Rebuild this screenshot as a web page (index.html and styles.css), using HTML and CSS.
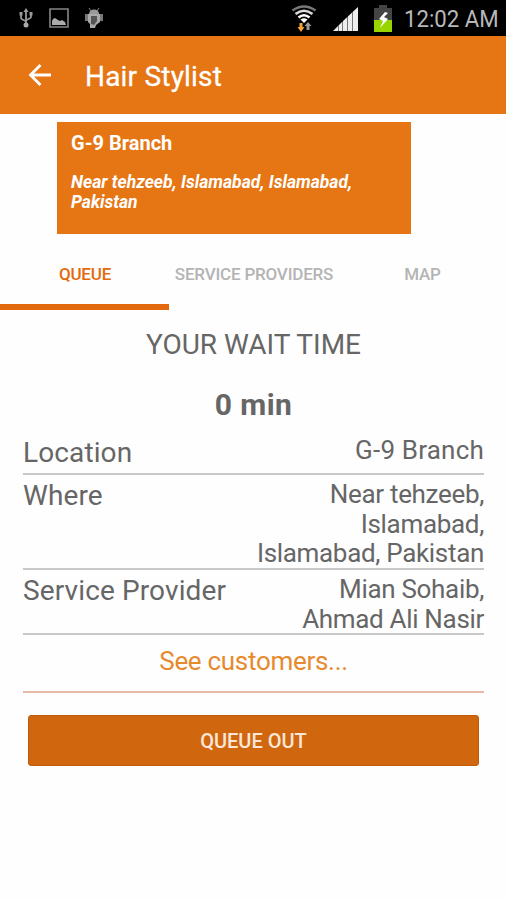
FILE: index.html
```html
<!DOCTYPE html>
<html lang="en">
<head>
<meta charset="utf-8">
<title>Hair Stylist</title>
<link rel="stylesheet" href="styles.css">
</head>
<body>
<div class="status">
  <svg class="usb" width="14" height="20" viewBox="0 0 14 20" fill="none" stroke="#999" stroke-width="1.800"><path d="M7 2v15M2 6v4c0 2 5 2 5 4M12 6v3c0 2-5 2-5 4"/><path d="M7 0L4.400 4h5.200zM.5 4h3v3.500h-3zM10.500 4h3v3.500h-3z" fill="#999" stroke="none"/><circle cx="7" cy="17" r="2.500" fill="#aaa" stroke="none"/></svg>
  <svg class="photo" width="20" height="20" viewBox="0 0 20 20"><path d="M1 1h18v18H1z" fill="none" stroke="#858585" stroke-width="1.600"/><path d="M3 17v-4l1-2 2-1 3 2 2 1 2-1 3 2 1 3z" fill="#aaa"/></svg>
  <svg class="droid" width="20" height="20" viewBox="0 0 20 20"><path d="M5 6c0-3 2-4.500 5-4.500S15 3 15 6z" fill="#999"/><path d="M5 0l2 3M15 0l-2 3" stroke="#888" stroke-width="1"/><path d="M1 6h3v7H1zM16 6h3v7h-3z" fill="#777"/><path d="M4 6h12v8l-4 3-1 3H6v-4l-2-2z" fill="#aaa"/><path d="M7 8h6v5l-3 4-3-1z" fill="#555"/></svg>
  <svg class="wifi" width="26" height="27" viewBox="0 0 26 27" fill="none"><path d="M1.500 5.500Q13-2.500 24.500 5.500" stroke="#777" stroke-width="2.500"/><path d="M4.500 9Q13 2.500 21.500 9" stroke="#ddd" stroke-width="2.600"/><path d="M7.500 12.500Q13 8 18.500 12.500" stroke="#fff" stroke-width="2.600"/><path d="M9.500 14.500q3.500-2.500 7 0L13 18z" fill="#fff"/><path d="M8.500 18h3v4h2L10 27l-3.500-5h2z" fill="#f2a33a"/><path d="M15.500 25v-4h-2l3.500-4 3.500 4h-2v4z" fill="#999"/></svg>
  <svg class="signal" width="25" height="24" viewBox="0 0 25 24"><path d="M0 24l5-5v5zM5.500 18.500l4-4V24h-4zM10 14l4.300-4v14H10zM14.800 9.500l4.300-4V24h-4.300zM19.600 5L25 0v24h-5.400z" fill="#eee"/></svg>
  <svg class="battery" width="18" height="27" viewBox="0 0 18 27"><path d="M5 0h8v3h5v12H0V3h5z" fill="#444"/><path d="M0 15h18v12H0z" fill="#98d400"/><path d="M11 7L5 14l4 2-3 7 8-9-4-2 4-4z" fill="#fff"/></svg>
  <span class="clock">12:02 AM</span>
</div>
<header class="bar">
  <svg width="24" height="22" viewBox="0 0 24 22" fill="none" stroke="#fff" stroke-width="2.800"><path d="M12.500 1L2.500 11l10 10M2.500 11H23"/></svg>
  <h1 class="title">Hair Stylist</h1>
</header>
<section class="card">
  <h2 class="card-name">G-9 Branch</h2>
  <p class="card-place">Near tehzeeb, Islamabad, Islamabad,<br>Pakistan</p>
</section>
<nav class="tabs">
  <div class="tab active">QUEUE</div>
  <div class="tab">SERVICE PROVIDERS</div>
  <div class="tab">MAP</div>
</nav>
<main class="main">
  <div class="wait">YOUR WAIT TIME</div>
  <div class="minutes">0 min</div>
  <div class="row r1"><div class="label">Location</div><div class="value">G-9 Branch</div></div>
  <div class="row r2"><div class="label">Where</div><div class="value">Near tehzeeb,<br>Islamabad,<br>Islamabad, Pakistan</div></div>
  <div class="row r3"><div class="label">Service Provider</div><div class="value">Mian Sohaib,<br>Ahmad Ali Nasir</div></div>
  <div class="more">See customers...</div>
  <button class="out">QUEUE OUT</button>
</main>
</body>
</html>
```

FILE: styles.css
```css
* { box-sizing: border-box; }
body { margin: 0; height: 900px; overflow: hidden; background: #fefefe; font-family: Roboto, sans-serif; color: #666; }
h1, h2, p { margin: 0; }
.status { height: 36px; background: #000; display: flex; align-items: flex-start; padding-left: 19px; }
.status svg { flex: none; }
.usb { margin-top: 8px; }
.photo { margin: 8px 0 0 16px; }
.droid { margin: 8px 0 0 15px; }
.wifi { margin: 5px 0 0 187px; }
.signal { margin: 7px 0 0 16px; }
.battery { margin: 5px 0 0 16px; }
.clock { width: 90px; margin-left: 12px; font-size: 24px; line-height: 38px; color: #b8b8b8; white-space: nowrap; transform: scaleX(.925); transform-origin: left; }
.bar { height: 78px; background: #e67514; display: flex; align-items: center; padding-left: 28px; }
.title { margin: 4px 0 0 33px; font-size: 28px; font-weight: 400; color: #fff; line-height: 34px; letter-spacing: .2px; -webkit-text-stroke: .3px #fff; }
.card { width: 354px; height: 112px; margin: 8px 0 0 57px; background: #e67514; color: #fff; padding: 9px 14px; }
.card-name { font-size: 20px; line-height: 24px; font-weight: 700; }
.card-place { margin-top: 18px; font-size: 17.500px; line-height: 19.500px; font-weight: 700; font-style: italic; white-space: nowrap; }
.tabs { height: 76px; display: grid; grid-template-columns: 169px 169px 168px; }
.tab { display: flex; justify-content: center; padding: 29px 0 0 1px; font-size: 17px; line-height: 22px; font-weight: 500; letter-spacing: -.2px; color: #b4b4b4; border-bottom: 6px solid transparent; white-space: nowrap; }
.active { color: #e26a0c; border-color: #e26a0c; }
.main { padding: 0 22px 0 23px; display: flex; flex-direction: column; }
.wait { margin-top: 18px; font-size: 28px; line-height: 34px; text-align: center; }
.minutes { margin-top: 26px; font-size: 30px; line-height: 34px; font-weight: 700; letter-spacing: .4px; text-align: center; }
.row { display: flex; justify-content: space-between; border-bottom: 2px solid #c8c8c8; }
.r1 { height: 53px; padding-top: 14px; }
.r2 { height: 95px; padding-top: 5px; }
.r3 { height: 65px; padding-top: 5px; }
.label { font-size: 28px; line-height: 32px; letter-spacing: .12px; }
.r1 .label { line-height: 34px; }
.value { font-size: 26px; line-height: 29.500px; letter-spacing: -.32px; text-align: right; white-space: nowrap; }
.r1 .value { letter-spacing: .2px; }
.more { height: 58px; padding-top: 10px; font-size: 26px; line-height: 32px; letter-spacing: -.3px; text-align: center; color: #e68a2e; border-bottom: 2px solid #e8b9a6; }
.out { margin: 22px 5px 0; height: 51px; border: 1px solid #c05a08; border-radius: 3px; background: #d0670f; color: #fbe6d8; font: 500 20px/48px Roboto, sans-serif; }
```
